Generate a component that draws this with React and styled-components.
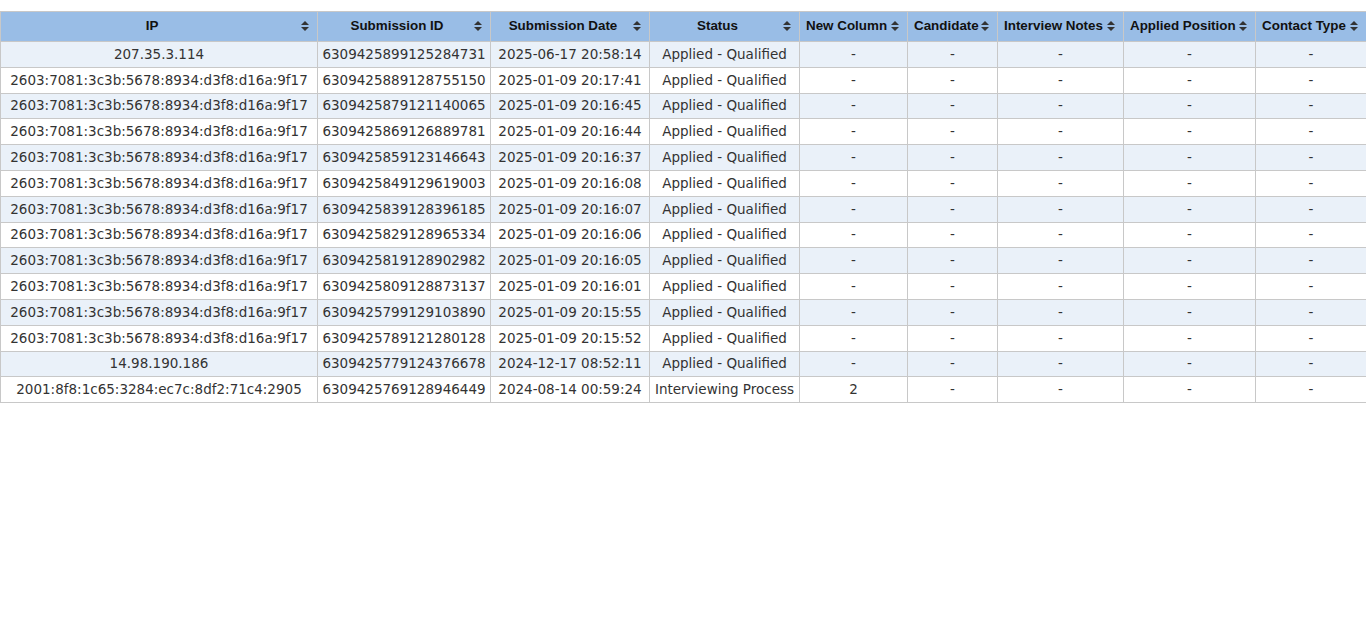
import React from 'react';
import styled, { createGlobalStyle } from 'styled-components';

const GlobalStyle = createGlobalStyle`
  html, body {
    margin: 0;
    padding: 0;
    background: #ffffff;
  }
`;

const Wrapper = styled.div`
  padding-top: 11px;
`;

const Table = styled.table`
  width: 1366px;
  border-collapse: collapse;
  table-layout: fixed;
  font-family: "DejaVu Sans", Verdana, sans-serif;
  font-size: 13.5px;
  line-height: 15px;
  color: #333333;
`;

const HeadCell = styled.th`
  position: relative;
  height: 27px;
  padding: 0 20px 2px 6px;
  background: #99bde6;
  border: 1px solid #c8c8c8;
  font-family: "Liberation Sans", Arial, sans-serif;
  font-size: 13.4px;
  font-weight: 700;
  color: #111111;
  text-align: center;
  white-space: nowrap;
`;

const SortIcon = styled.svg`
  position: absolute;
  right: 8px;
  top: 50%;
  margin-top: -6px;
  width: 8px;
  height: 10px;
`;

const Row = styled.tr`
  background: ${props => (props.$alt ? '#eaf1f9' : '#ffffff')};
`;

const Cell = styled.td`
  height: 24.8px;
  padding: 0 4px;
  border: 1px solid #c8c8c8;
  text-align: center;
  white-space: nowrap;
  overflow: hidden;
`;

const columns = [
  { label: 'IP', width: 317 },
  { label: 'Submission ID', width: 173 },
  { label: 'Submission Date', width: 159 },
  { label: 'Status', width: 150 },
  { label: 'New Column', width: 108 },
  { label: 'Candidate', width: 90 },
  { label: 'Interview Notes', width: 126 },
  { label: 'Applied Position', width: 132 },
  { label: 'Contact Type', width: 111 },
];

const v6 = '2603:7081:3c3b:5678:8934:d3f8:d16a:9f17';
const aq = 'Applied - Qualified';

const rows = [
  ['207.35.3.114', '6309425899125284731', '2025-06-17 20:58:14', aq],
  [v6, '6309425889128755150', '2025-01-09 20:17:41', aq],
  [v6, '6309425879121140065', '2025-01-09 20:16:45', aq],
  [v6, '6309425869126889781', '2025-01-09 20:16:44', aq],
  [v6, '6309425859123146643', '2025-01-09 20:16:37', aq],
  [v6, '6309425849129619003', '2025-01-09 20:16:08', aq],
  [v6, '6309425839128396185', '2025-01-09 20:16:07', aq],
  [v6, '6309425829128965334', '2025-01-09 20:16:06', aq],
  [v6, '6309425819128902982', '2025-01-09 20:16:05', aq],
  [v6, '6309425809128873137', '2025-01-09 20:16:01', aq],
  [v6, '6309425799129103890', '2025-01-09 20:15:55', aq],
  [v6, '6309425789121280128', '2025-01-09 20:15:52', aq],
  ['14.98.190.186', '6309425779124376678', '2024-12-17 08:52:11', aq],
  ['2001:8f8:1c65:3284:ec7c:8df2:71c4:2905', '6309425769128946449', '2024-08-14 00:59:24', 'Interviewing Process', '2'],
];

const Sort = () => (
  <SortIcon viewBox="0 0 8 10">
    <path d="M4 0 L8 4 H0 Z M0 6 H8 L4 10 Z" fill="#333333" />
  </SortIcon>
);

const App = () => (
  <Wrapper>
    <GlobalStyle />
    <Table>
      <colgroup>
        {columns.map(c => (
          <col key={c.label} style={{ width: c.width }} />
        ))}
      </colgroup>
      <thead>
        <tr>
          {columns.map(c => (
            <HeadCell key={c.label}>
              {c.label}
              <Sort />
            </HeadCell>
          ))}
        </tr>
      </thead>
      <tbody>
        {rows.map((r, i) => (
          <Row key={r[1]} $alt={i % 2 === 0}>
            {columns.map((c, j) => (
              <Cell key={c.label}>{r[j] ?? '-'}</Cell>
            ))}
          </Row>
        ))}
      </tbody>
    </Table>
  </Wrapper>
);

export default App;
